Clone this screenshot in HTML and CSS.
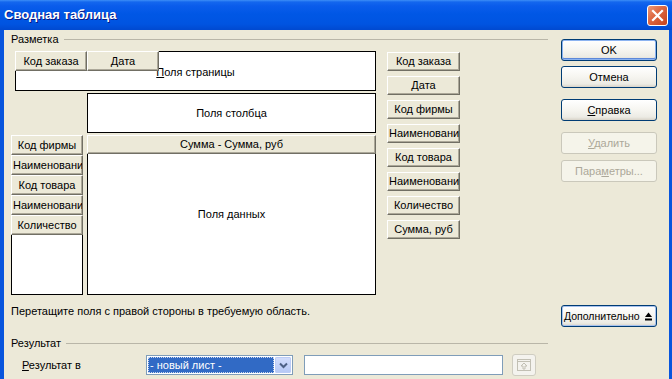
FILE: index.html
```html
<!DOCTYPE html>
<html lang="ru">
<head>
    <meta charset="UTF-8">
    <title>Сводная таблица</title>
    <link rel="stylesheet" href="styles.css">
</head>
<body>

<div class="window">
    <div class="titlebar">
        <span class="title">Сводная таблица</span>
        <div class="close">
            <svg width="13" height="13" viewBox="0 0 13 13"><path d="M2 2 L11 11 M11 2 L2 11" stroke="#fff" stroke-width="2.2" stroke-linecap="square"/></svg>
        </div>
    </div>

    <div class="client">
        <div class="main">
            <div class="group-head"><span>Разметка</span><span class="rule"></span></div>

            <div class="layout">
                <div class="page-area">
                    <div class="page-buttons">
                        <div class="field">Код заказа</div>
                        <div class="field">Дата</div>
                    </div>
                    <span><u>П</u>оля страницы</span>
                </div>

                <div class="col-area">Поля столбца</div>

                <div class="row-area">
                    <div class="field">Код фирмы</div>
                    <div class="field">Наименование</div>
                    <div class="field">Код товара</div>
                    <div class="field">Наименование</div>
                    <div class="field">Количество</div>
                    <div class="row-empty"></div>
                </div>

                <div class="data-area">
                    <div class="field">Сумма - Сумма, руб</div>
                    <div class="data-body">Поля данных</div>
                </div>

                <div class="field-list">
                    <div class="field">Код заказа</div>
                    <div class="field">Дата</div>
                    <div class="field">Код фирмы</div>
                    <div class="field">Наименование</div>
                    <div class="field">Код товара</div>
                    <div class="field">Наименование</div>
                    <div class="field">Количество</div>
                    <div class="field">Сумма, руб</div>
                </div>
            </div>

            <p class="hint">Перетащите поля с правой стороны в требуемую область.</p>

            <div class="group-head result-head"><span>Результат</span><span class="rule"></span></div>

            <div class="result-row">
                <span class="result-label"><u>Р</u>езультат в</span>
                <div class="select">
                    <span class="select-value">- новый лист -</span>
                    <span class="select-arrow">
                        <svg width="9" height="7" viewBox="0 0 9 7"><path d="M1 1.5 L4.5 5 L8 1.5" fill="none" stroke="#4d6185" stroke-width="2"/></svg>
                    </span>
                </div>
                <div class="text-input"></div>
                <div class="shrink-btn">
                    <svg width="16" height="14" viewBox="0 0 16 14">
                        <rect x="1.5" y="1.5" width="13" height="11" fill="none" stroke="#c2c0b4"/>
                        <line x1="1.5" y1="3.5" x2="14.5" y2="3.5" stroke="#c2c0b4"/>
                        <path d="M8 5 L5 8 L7 8 L7 11 L9 11 L9 8 L11 8 Z" fill="none" stroke="#c2c0b4"/>
                    </svg>
                </div>
            </div>
        </div>

        <div class="side">
            <div class="btn default">OK</div>
            <div class="btn cancel">Отмена</div>
            <div class="btn help"><span><u>С</u>правка</span></div>
            <div class="btn disabled delete"><span><u>У</u>далить</span></div>
            <div class="btn disabled params"><span>Пара<u>м</u>етры...</span></div>
            <div class="btn more">
                <span>Дополнительно</span>
                <svg width="7" height="9" viewBox="0 0 7 9"><path d="M3.5 0.5 L7 5 L0 5 Z" fill="#000"/><rect x="0" y="6.5" width="7" height="2" fill="#000"/></svg>
            </div>
        </div>
    </div>
</div>

</body>
</html>
```

FILE: styles.css
```css
* {
    box-sizing: border-box;
}
body {
    margin: 0;
    font-family: "Liberation Sans", Arial, sans-serif;
    font-size: 11px;
    color: #000;
    background: #fff;
}
.window {
    width: 672px;
    height: 379px;
    display: flex;
    flex-direction: column;
    background: #0855dd;
    overflow: hidden;
}
.titlebar {
    height: 30px;
    flex: none;
    display: flex;
    align-items: center;
    justify-content: space-between;
    padding: 0 4px;
    background: linear-gradient(to bottom, #3d8ef7 0, #1467ee 2px, #0a5ceb 6px, #0057e5 14px, #0054e1 24px, #0049d0 30px);
}
.title {
    color: #fff;
    font-size: 13px;
    font-weight: bold;
    text-shadow: 1px 1px #0a1883;
    margin-top: -1px;
}
.close {
    width: 21px;
    height: 21px;
    border: 1px solid #fff;
    border-radius: 3px;
    background: linear-gradient(135deg, #eb9a78 0%, #de6a44 40%, #c6421c 100%);
    display: flex;
    align-items: center;
    justify-content: center;
}
.client {
    flex: 1;
    margin: 0 3px 0 4px;
    background: #ece9d8;
    display: flex;
}
.main {
    width: 544px;
    padding-left: 7px;
}
.group-head {
    display: flex;
    align-items: center;
    height: 13px;
    line-height: 13px;
    margin-top: 3px;
}
.group-head .rule {
    flex: 1;
    margin-left: 5px;
    border-top: 1px solid #b9b6a8;
}
.layout {
    display: grid;
    grid-template-columns: 72px 289px 80px;
    grid-template-rows: 40px 40px 160px;
    column-gap: 4px;
    row-gap: 2px;
    margin-top: 5px;
}
.field {
    height: 20px;
    line-height: 18px;
    background: #ece9d8;
    border-top: 1px solid #fff;
    border-left: 1px solid #fff;
    border-right: 1px solid #716f64;
    border-bottom: 1px solid #716f64;
    box-shadow: inset -1px -1px #aca899;
    text-align: center;
    white-space: nowrap;
    overflow: hidden;
    padding: 0 1px;
}
.page-area {
    grid-column: 1 / 3;
    margin-left: 4px;
    position: relative;
    background: #fff;
    border: 1px solid #000;
    display: flex;
    align-items: center;
    justify-content: center;
    padding-top: 2px;
}
.page-buttons {
    position: absolute;
    top: -1px;
    left: -1px;
    display: flex;
}
.page-buttons .field {
    width: 72px;
}
.col-area {
    grid-column: 2;
    grid-row: 2;
    background: #fff;
    border: 1px solid #000;
    display: flex;
    align-items: center;
    justify-content: center;
    padding-bottom: 1px;
}
.row-area {
    grid-column: 1;
    grid-row: 3;
    display: flex;
    flex-direction: column;
}
.row-empty {
    flex: 1;
    background: #fff;
    border: 1px solid #000;
    border-top: none;
}
.data-area {
    grid-column: 2;
    grid-row: 3;
    display: flex;
    flex-direction: column;
}
.data-area .field {
    height: 19px;
    line-height: 17px;
}
.data-body {
    flex: 1;
    background: #fff;
    border: 1px solid #000;
    border-top: none;
    display: flex;
    align-items: center;
    justify-content: center;
    padding-bottom: 20px;
}
.field-list {
    grid-column: 3;
    grid-row: 1 / 4;
    display: flex;
    flex-direction: column;
    gap: 5px;
    padding: 1px 0 0 7px;
}
.field-list .field {
    width: 73px;
    height: 19px;
    line-height: 17px;
}
.hint {
    margin: 10px 0 0 0;
    line-height: 13px;
}
.result-head {
    margin-top: 19px;
}
.result-row {
    display: flex;
    align-items: center;
    height: 22px;
    margin-top: 4px;
    padding-left: 11px;
}
.result-label {
    width: 124px;
}
.select {
    width: 147px;
    height: 20px;
    border: 1px solid #7f9db9;
    background: #fff;
    display: flex;
    padding: 1px;
}
.select-value {
    flex: 1;
    background: #316ac5;
    color: #fff;
    line-height: 14px;
    border: 1px dotted #c9d6ee;
    padding-left: 1px;
}
.select-arrow {
    width: 16px;
    margin-left: 1px;
    background: linear-gradient(to bottom, #d2ddfc, #b6c9f6);
    border: 1px solid #bcccf6;
    border-radius: 1px;
    display: flex;
    align-items: center;
    justify-content: center;
}
.text-input {
    width: 199px;
    height: 20px;
    margin-left: 11px;
    margin-top: -1px;
    border: 1px solid #7f9db9;
    background: #fff;
}
.shrink-btn {
    width: 24px;
    height: 22px;
    margin-left: 9px;
    border: 1px solid #cfcdc1;
    border-radius: 3px;
    background: #f4f3ee;
    display: flex;
    align-items: center;
    justify-content: center;
}
.side {
    width: 96px;
    margin-left: 13px;
    padding-top: 9px;
    display: flex;
    flex-direction: column;
}
.btn {
    height: 22px;
    border: 1px solid #003c74;
    border-radius: 3px;
    background: linear-gradient(to bottom, #ffffff 0%, #f6f5f0 50%, #ecebe4 85%, #d8d3c8 100%);
    display: flex;
    align-items: center;
    justify-content: center;
}
.btn.default {
    box-shadow: inset 0 0 0 1px #8cb3f0, inset 0 -1px 0 1px #5d88d9;
}
.btn.cancel {
    margin-top: 5px;
}
.btn.help {
    margin-top: 11px;
}
.btn.delete {
    margin-top: 11px;
}
.btn.params {
    margin-top: 6px;
}
.btn.disabled {
    border-color: #cac8bb;
    background: #f5f4ea;
    color: #aca899;
}
.btn.more {
    margin-top: 123px;
    justify-content: space-between;
    padding: 0 4px 0 2px;
    font-size: 10.5px;
    box-shadow: inset 0 0 0 1px #a8c2ee;
}
```
